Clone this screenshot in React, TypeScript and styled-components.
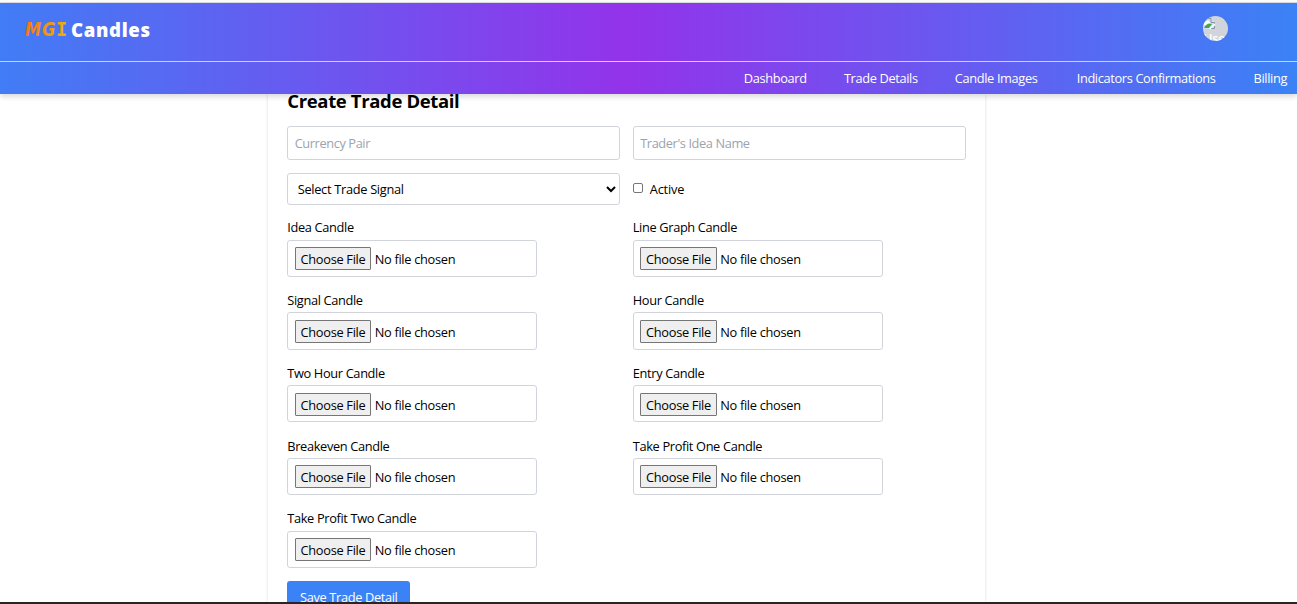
import React from "react";
import styled, { createGlobalStyle } from "styled-components";

const GlobalStyle = createGlobalStyle`
  *, *::before, *::after { box-sizing: border-box; }
  body { margin: 0; background: #fff; overflow: hidden; }
  input, select, button { font: inherit; letter-spacing: inherit; color: inherit; }
`;

const Page = styled.div`
  display: flex;
  flex-direction: column;
  height: 604px;
  overflow: hidden;
  font: 12.8px/19.2px "Open Sans", "Segoe UI", sans-serif;
  letter-spacing: -0.35px;
  color: #000;
  border-bottom: 2px solid #2b2422;
`;

const BrowserEdge = styled.div`
  flex: none;
  height: 3px;
  background: #fbfbfc;
  border-bottom: 1px solid #dcdde0;
`;

const Header = styled.header`
  position: relative;
  z-index: 1;
  flex: none;
  height: 91px;
  background: linear-gradient(to right, #3b82f6 -46px, #9333ea 626px, #3b82f6 1297px);
  color: #fff;
  box-shadow: 0 3px 5px rgba(0, 0, 0, 0.14);
`;

const TopRow = styled.div`
  display: flex;
  justify-content: space-between;
  height: 59px;
  padding: 13px 69px 0 25px;
  border-bottom: 1px solid #d1d5db;
`;

const Brand = styled.div`
  display: flex;
  gap: 4px;
  height: 26px;
`;

const BrandMark = styled.svg`
  display: block;
  width: 42px;
  height: 26px;
  font: 700 19px "DejaVu Sans", sans-serif;
  letter-spacing: 0;
`;

const BrandName = styled.span`
  font: 800 18.6px/27px "Open Sans", sans-serif;
  letter-spacing: 0.65px;
`;

const Avatar = styled.div`
  width: 25px;
  height: 25px;
  border-radius: 50%;
  background: #d1d5db;
  overflow: hidden;
  font-size: 12.8px;
  line-height: 14px;
  font-weight: 600;
  text-align: center;
  svg { display: block; margin-top: 1px; }
`;

const Nav = styled.nav`
  display: flex;
  justify-content: flex-end;
  align-items: center;
  height: 32px;
  padding: 1px 9px 0 0;
  letter-spacing: -0.36px;
`;

const NavItem = styled.a<{ $w: number }>`
  width: ${(p) => p.$w}px;
  margin-left: 38.3px;
  padding-top: 1px;
  white-space: nowrap;
`;

const Card = styled.main`
  flex: 1;
  width: 717.4px;
  margin-left: 268.1px;
  padding: 0 19.2px;
  box-shadow: 0 0 3px rgba(0, 0, 0, 0.14);
  min-height: 0;
`;

const Title = styled.h2`
  margin: 0 0 18px;
  height: 14px;
  font-size: 18.5px;
  line-height: 14px;
  font-weight: 700;
  letter-spacing: -0.36px;
`;

const Grid = styled.div`
  display: grid;
  grid-template-columns: 333px 333px;
  column-gap: 12.5px;
`;

const TextInput = styled.input`
  width: 100%;
  height: 34px;
  padding: 0 6.4px;
  border: 1px solid #d1d5db;
  border-radius: 3px;
  background: #fff;
  letter-spacing: -0.4px;
  &::placeholder { color: #9ca3af; opacity: 1; }
`;

const Select = styled.select`
  width: 100%;
  height: 32px;
  margin-top: 13px;
  padding: 0 2px 0 5.4px;
  border: 1px solid #d1d5db;
  border-radius: 3px;
  background: #fff;
  letter-spacing: -0.3px;
`;

const CheckLabel = styled.label`
  display: flex;
  align-items: center;
  height: 32px;
  margin-top: 13px;
  padding-top: 1px;
  letter-spacing: -0.2px;
`;

const Checkbox = styled.input`
  appearance: none;
  width: 10px;
  height: 10px;
  margin: 0 7px 3px 0;
  border: 1px solid #767676;
  border-radius: 2px;
  background: #fff;
`;

const Files = styled(Grid)`
  margin-top: 12.6px;
  row-gap: 13px;
`;

const Field = styled.label`
  display: block;
  height: 59.75px;
`;

const Caption = styled.span`
  display: block;
  height: 22.1px;
  padding-top: 0.8px;
  line-height: 19px;
`;

const FileInput = styled.input`
  display: block;
  width: 250px;
  height: 37.2px;
  padding: 6.4px;
  border: 1px solid #d1d5db;
  border-radius: 3px;
  background: #fff;
  letter-spacing: -0.3px;
  &::file-selector-button {
    width: 76.6px;
    height: 23px;
    margin: 0 3.4px 0 0;
    padding: 2px 4px 0;
    border: 1px solid #767676;
    border-radius: 1px;
    background: #efefef;
    font: inherit;
    letter-spacing: inherit;
    color: #000;
  }
`;

const SaveButton = styled.button`
  display: block;
  width: 123px;
  height: 32px;
  margin-top: 12.8px;
  padding: 0;
  border: 0;
  border-radius: 3px;
  background: #3b82f6;
  color: #fff;
`;

const navItems: [string, number][] = [
  ["Dashboard", 61.8],
  ["Trade Details", 72.6],
  ["Candle Images", 83.6],
  ["Indicators Confirmations", 138.5],
  ["Billing", 34.5],
];

const fileFields = [
  "Idea Candle",
  "Line Graph Candle",
  "Signal Candle",
  "Hour Candle",
  "Two Hour Candle",
  "Entry Candle",
  "Breakeven Candle",
  "Take Profit One Candle",
  "Take Profit Two Candle",
];

function BrokenImage() {
  return (
    <svg width="13" height="14" viewBox="0 0 13 14">
      <path d="M0 1h8l4 4v7H0z" fill="#c9defa" />
      <path d="M1 6q3-4 6-1l1 3H1z" fill="#fff" />
      <path d="M1 11q3-6 8-4l-3 4H1z" fill="#4ba63a" />
      <path d="M0 1.5h8v4h3.5V7M11.5 9v2.5H8" fill="none" stroke="#8b949e" />
      <path d="M6.5 12 12 7" stroke="#fff" strokeWidth="1.5" />
    </svg>
  );
}

function Logo() {
  return (
    <BrandMark viewBox="0 0 42 26">
      <defs>
        <linearGradient id="brand" x1="0" x2="42" y1="0" y2="0" gradientUnits="userSpaceOnUse">
          <stop offset="0" stopColor="#f97316" />
          <stop offset="1" stopColor="#eab308" />
        </linearGradient>
      </defs>
      <g fill="url(#brand)">
        <text x="0" y="20" textLength="16" lengthAdjust="spacingAndGlyphs" fontStyle="italic">M</text>
        <text x="17" y="20" textLength="13.5" lengthAdjust="spacingAndGlyphs" fontStyle="italic">G</text>
        <text x="31" y="20" textLength="11" lengthAdjust="spacingAndGlyphs" fontFamily="DejaVu Sans Mono">I</text>
      </g>
    </BrandMark>
  );
}

export default function App() {
  return (
    <Page>
      <GlobalStyle />
      <BrowserEdge />
      <Header>
        <TopRow>
          <Brand>
            <Logo />
            <BrandName>Candles</BrandName>
          </Brand>
          <Avatar>
            <BrokenImage />
            User
          </Avatar>
        </TopRow>
        <Nav>
          {navItems.map(([text, w]) => (
            <NavItem key={text} $w={w}>{text}</NavItem>
          ))}
        </Nav>
      </Header>
      <Card>
        <Title>Create Trade Detail</Title>
        <Grid>
          <TextInput placeholder="Currency Pair" />
          <TextInput placeholder="Trader's Idea Name" />
          <Select defaultValue="">
            <option value="">Select Trade Signal</option>
          </Select>
          <CheckLabel>
            <Checkbox type="checkbox" />
            Active
          </CheckLabel>
        </Grid>
        <Files>
          {fileFields.map((name) => (
            <Field key={name}>
              <Caption>{name}</Caption>
              <FileInput type="file" />
            </Field>
          ))}
        </Files>
        <SaveButton>Save Trade Detail</SaveButton>
      </Card>
    </Page>
  );
}
